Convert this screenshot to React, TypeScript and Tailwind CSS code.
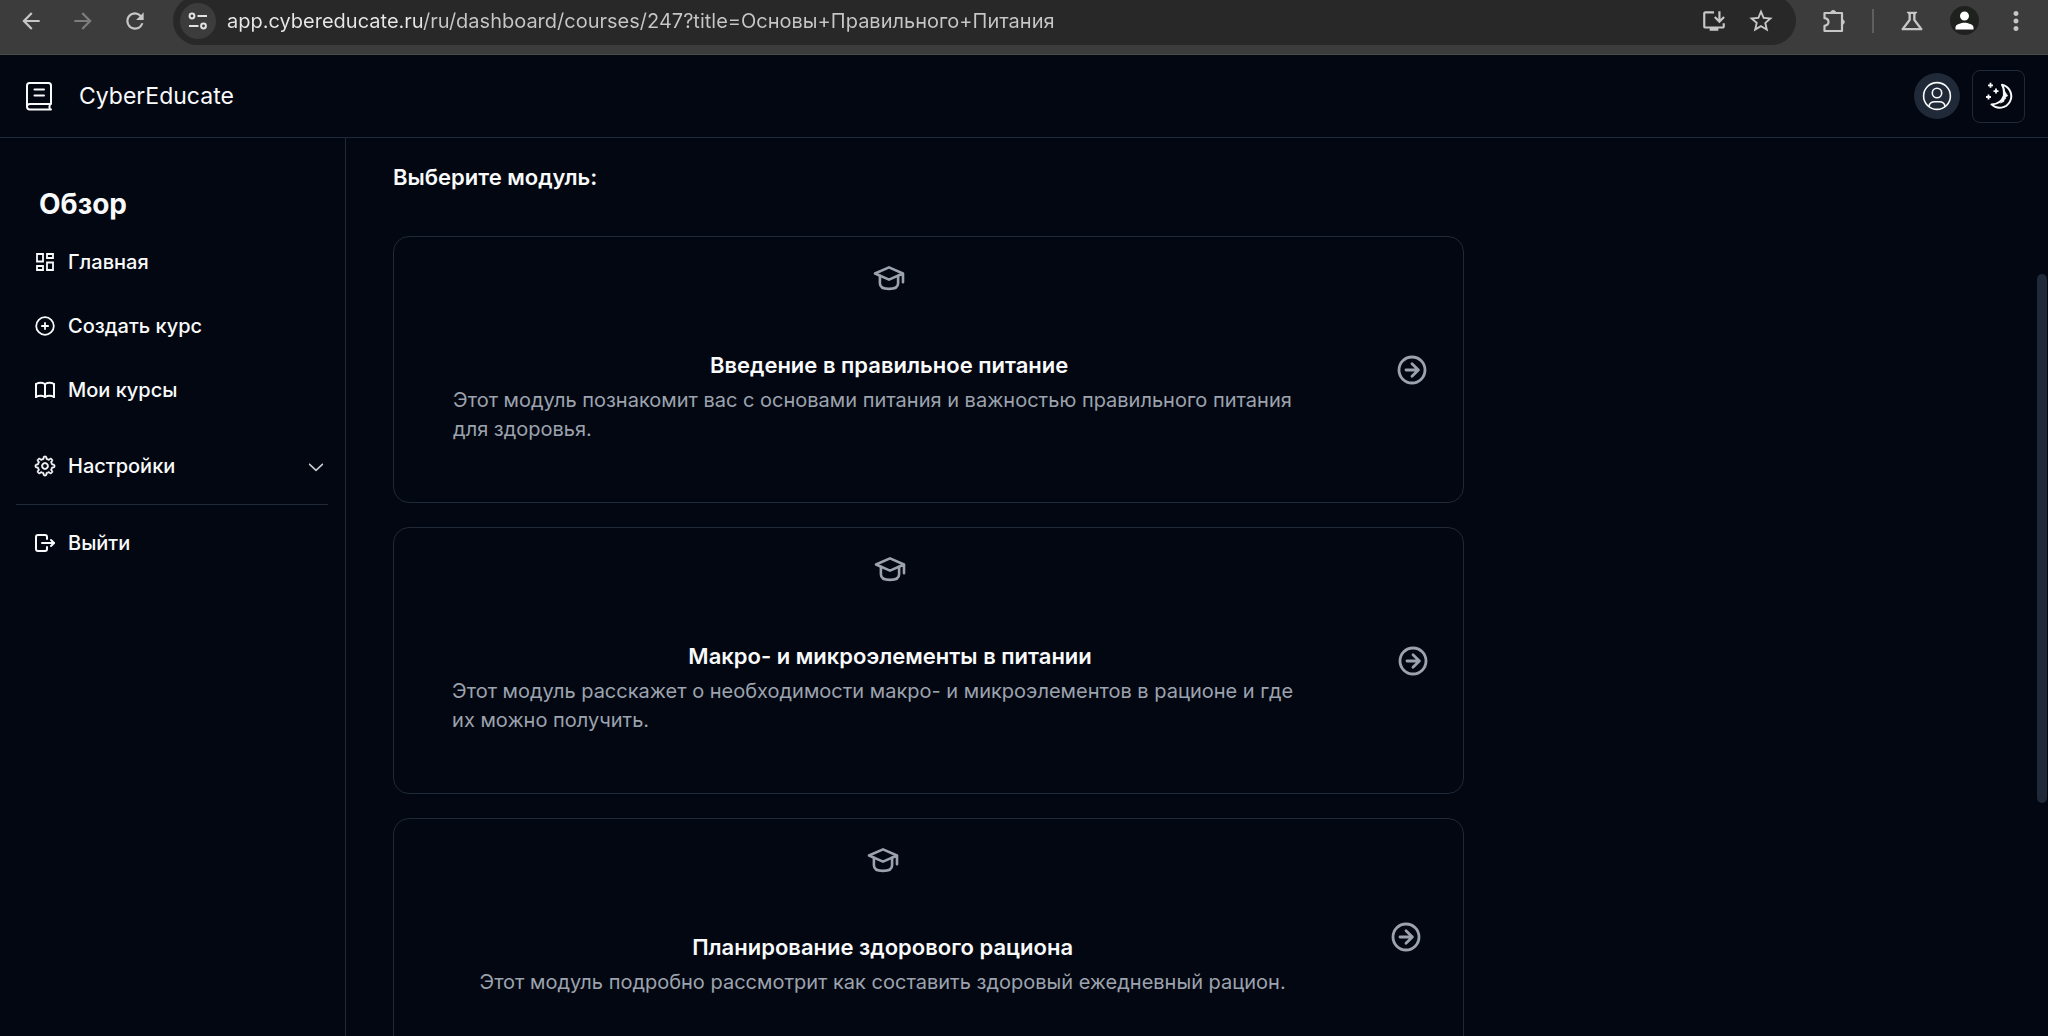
import type { ReactNode } from "react";
import {
  MdArrowBack,
  MdArrowForward,
  MdMoreVert,
  MdOutlineInstallDesktop,
  MdOutlineScience,
  MdPerson,
  MdRefresh,
  MdStarBorder,
} from "react-icons/md";
import { RxChevronDown, RxGear } from "react-icons/rx";
import { TbBook, TbLogout } from "react-icons/tb";

const modules = [
  {
    title: "Введение в правильное питание",
    description:
      "Этот модуль познакомит вас с основами питания и важностью правильного питания для здоровья.",
    width: "max-w-[872px]",
  },
  {
    title: "Макро- и микроэлементы в питании",
    description:
      "Этот модуль расскажет о необходимости макро- и микроэлементов в рационе и где их\u00a0можно получить.",
    width: "max-w-[876px]",
  },
  {
    title: "Планирование здорового рациона",
    description:
      "Этот модуль подробно рассмотрит как составить здоровый ежедневный рацион.",
    width: "max-w-[846px]",
  },
];

const TuneIcon = () => (
  <svg viewBox="0 0 20 18" className="w-5 h-[18px]" fill="none" stroke="currentColor" strokeWidth="2">
    <circle cx="4" cy="4" r="2.4" />
    <path d="M9.5 4H19M1 14h9.5" />
    <circle cx="15.5" cy="14" r="2.4" />
  </svg>
);

const PuzzleIcon = () => (
  <svg viewBox="0 0 26 26" className="w-[26px] h-[26px]" fill="none" stroke="currentColor" strokeWidth="2.2" strokeLinejoin="round">
    <path d="M3.5 5h17.5v18H3.5v-5.2c2.6-.4 4-1.8 4-3.8s-1.4-3.4-4-3.8z" />
    <path d="M9.5 4.5a2.8 2.8 0 0 1 5.4 0zM21.5 11.4a2.8 2.8 0 0 1 0 5.2z" fill="currentColor" strokeWidth="1" />
  </svg>
);

const LogoIcon = () => (
  <svg viewBox="0 0 28 30" className="w-7 h-[30px]" fill="none" stroke="currentColor" strokeWidth="2" strokeLinecap="round" strokeLinejoin="round">
    <path d="M2 25.5V4.5C2 2.8 3 2 4.5 2h19C25 2 26 2.8 26 4.5V23H4.8C3.2 23 2 24 2 25.8S3.2 28.5 4.8 28.5H26M25 23.5c-.8 1.6-.8 3.2 0 4.8" />
    <path d="M9.5 8.5h9.5M9.5 14.5h9.5" />
  </svg>
);

const UserIcon = () => (
  <svg viewBox="0 0 30 30" className="w-[30px] h-[30px]" fill="none" stroke="currentColor" strokeWidth="1.6">
    <circle cx="15" cy="15" r="13.4" />
    <circle cx="15" cy="12" r="4.7" />
    <path d="M7 25.6c.3-3.2 2.8-4.8 5.8-4.8h4.4c3 0 5.5 1.6 5.8 4.8" />
  </svg>
);

const MoonIcon = () => (
  <svg viewBox="0 0 28 28" className="w-7 h-7" fill="none" stroke="currentColor" strokeLinejoin="round">
    <path d="M17 2.8A11.6 11.6 0 1 1 6.500 22.400C12.500 22.200 17 19 18.800 14 19.800 10 19 6.300 17 2.800z" strokeWidth="2" />
    <path d="M18 5l2.200 5 2.600 3.800-2.200 1.400.2 1.600-1.600.8-.2 1.800-3.600 1.800 3-7z" fill="currentColor" strokeWidth="0.5" />
    <path d="M5.500.800v5M3 3.300h5M11 6.600v5M8.500 9.100h5M3.500 12.500v5M1 15h5" strokeWidth="1.800" />
  </svg>
);

const DashboardIcon = () => (
  <svg viewBox="0 0 24 24" className="w-6 h-6" fill="none" stroke="currentColor" strokeWidth="1.8">
    <path d="M4 4h6v7.500H4zM14 4h6v4h-6zM4 16h6v4H4zM14 12.500h6V20h-6z" />
  </svg>
);

const PlusCircleIcon = () => (
  <svg viewBox="0 0 24 24" className="w-6 h-6" fill="none" stroke="currentColor" strokeWidth="1.8">
    <circle cx="12" cy="12" r="8.8" />
    <path d="M12 8.200v7.600M8.200 12h7.600" />
  </svg>
);

const GraduationIcon = () => (
  <svg viewBox="0 0 32 32" className="w-8 h-8" fill="none" stroke="currentColor" strokeWidth="2.6" strokeLinecap="round" strokeLinejoin="round">
    <path d="M2 11.500 16 5.400l14 6.100-14 6.100zM30 11.500v8.800" />
    <path d="M6.900 13.800v7.400c0 3.200 3 5.700 9.100 5.700s9.100-2.500 9.100-5.700v-7.400" />
  </svg>
);

const ArrowCircleIcon = () => (
  <svg viewBox="0 0 30 30" className="w-[30px] h-[30px] shrink-0" fill="none" stroke="currentColor" strokeWidth="2.8" strokeLinecap="round" strokeLinejoin="round">
    <circle cx="15" cy="15" r="13" />
    <path d="M9 15h12.400M15 8.800l6.400 6.200-6.400 6.200" />
  </svg>
);

const ChromeButton = ({ label, children }: { label: string; children: ReactNode }) => (
  <button aria-label={label} className="w-[52px] shrink-0 flex items-center justify-center text-[#c7c7c7]">
    {children}
  </button>
);

const BrowserBar = () => (
  <div className="h-[55px] shrink-0 pb-[13px] pl-[5px] pr-[6px] flex items-center bg-[#3c3c3c] border-b border-[#4a4a48]">
    <ChromeButton label="Назад">
      <MdArrowBack className="w-[26px] h-[26px]" />
    </ChromeButton>
    <ChromeButton label="Вперёд">
      <MdArrowForward className="w-[26px] h-[26px] text-[#7d7d7d]" />
    </ChromeButton>
    <ChromeButton label="Обновить">
      <MdRefresh className="w-[26px] h-[26px]" />
    </ChromeButton>

    {/* Address bar */}
    <div className="h-[49px] grow min-w-0 mx-3 pl-[7px] pr-3 flex items-center rounded-full bg-[#282828]">
      <button aria-label="Сведения о сайте" className="w-9 h-9 shrink-0 rounded-full bg-[#3c3c3c] text-[#e3e3e3] flex items-center justify-center">
        <TuneIcon />
      </button>
      <input
        aria-label="Адрес"
        readOnly
        value="app.cybereducate.ru/ru/dashboard/courses/247?title=Основы+Правильного+Питания"
        className="ml-[11px] grow min-w-0 h-8 text-xl outline-none bg-linear-to-r from-[#e8e8e8] from-[196px] to-[#c7c7c7] to-[196px] bg-clip-text text-transparent"
      />
      <button aria-label="Установить приложение" className="w-[47px] shrink-0 flex justify-center text-[#c7c7c7]">
        <MdOutlineInstallDesktop className="w-[26px] h-[26px]" />
      </button>
      <button aria-label="Добавить в закладки" className="w-[47px] shrink-0 flex justify-center text-[#c7c7c7]">
        <MdStarBorder className="w-7 h-7" />
      </button>
    </div>

    <ChromeButton label="Расширения">
      <PuzzleIcon />
    </ChromeButton>
    <div className="w-[2px] h-6 mx-3 shrink-0 bg-[#5f5f5f]" />
    <ChromeButton label="Эксперименты">
      <MdOutlineScience className="w-7 h-7" />
    </ChromeButton>
    <ChromeButton label="Профиль">
      <span className="w-[29px] h-[29px] rounded-full bg-[#1f211f] flex items-center justify-center">
        <MdPerson className="w-[27px] h-[27px] text-white" />
      </span>
    </ChromeButton>
    <ChromeButton label="Меню">
      <MdMoreVert className="w-[30px] h-[30px]" />
    </ChromeButton>
  </div>
);

const Navbar = () => (
  <header className="h-[83px] shrink-0 pl-[25px] pr-[23px] flex items-center justify-between border-b border-[#1f2937]">
    <a href="#" className="flex items-center gap-[26px]">
      <LogoIcon />
      <span className="text-[23px] leading-8">CyberEducate</span>
    </a>
    <div className="flex items-center gap-3">
      <button aria-label="Аккаунт" className="w-[46px] h-[46px] rounded-full bg-[#1f2937] flex items-center justify-center">
        <UserIcon />
      </button>
      <button aria-label="Сменить тему" className="w-[53px] h-[53px] rounded-lg border border-[#1f2937] flex items-center justify-center">
        <MoonIcon />
      </button>
    </div>
  </header>
);

const NavItem = ({ icon, children }: { icon: ReactNode; children: ReactNode }) => (
  <a href="#" className="h-12 pl-[17px] flex items-center gap-[11px] text-xl font-medium">
    <span className="w-6 flex justify-center">{icon}</span>
    {children}
  </a>
);

const Sidebar = () => (
  <aside className="w-[346px] shrink-0 pt-12 pl-4 pr-[17px] border-r border-[#1f2937]">
    <h2 className="pl-[23px] mb-4 text-[28px] leading-9 font-bold">Обзор</h2>
    <nav>
      <div className="flex flex-col gap-4">
        <NavItem icon={<DashboardIcon />}>Главная</NavItem>
        <NavItem icon={<PlusCircleIcon />}>Создать курс</NavItem>
        <NavItem icon={<TbBook className="w-6 h-6" />}>Мои курсы</NavItem>
      </div>
      <button className="w-full h-12 mt-7 pl-[17px] flex items-center gap-[11px] text-xl font-medium">
        <span className="w-6 flex justify-center">
          <RxGear className="w-[22px] h-[22px]" stroke="currentColor" strokeWidth="0.4" />
        </span>
        Настройки
        <RxChevronDown className="w-6 h-6 ml-auto text-[#c9ccd2]" />
      </button>
      <hr className="my-[14px] border-[#1f2937]" />
      <NavItem icon={<TbLogout className="w-6 h-6" />}>Выйти</NavItem>
    </nav>
  </aside>
);

const ModuleCard = ({ title, description, width }: (typeof modules)[number]) => (
  <a href="#" className="pl-[23px] flex items-center justify-around rounded-2xl border border-[#1f2937] text-[#9ca3af]">
    <div className={`grow ${width} pt-[25px] pb-[58px] flex flex-col items-center`}>
      <GraduationIcon />
      <h3 className="mt-[55px] mb-[5px] text-[22px] leading-8 font-semibold text-[#f9fafb]">{title}</h3>
      <p className="text-xl leading-[29px]">{description}</p>
    </div>
    <ArrowCircleIcon />
  </a>
);

export default function App() {
  return (
    <div className="h-screen relative flex flex-col overflow-hidden bg-[#030711] text-[#f9fafb] font-['Inter',sans-serif]">
      <BrowserBar />
      <Navbar />
      <div className="flex grow min-h-0">
        <Sidebar />
        <main className="grow min-w-0 pt-[23px] pl-[47px] pr-12 overflow-hidden">
          <h1 className="text-[22px] leading-8 font-semibold">Выберите модуль:</h1>
          <div className="w-2/3 mt-[43px] flex flex-col gap-6">
            {modules.map((module) => (
              <ModuleCard key={module.title} {...module} />
            ))}
          </div>
        </main>
      </div>
      {/* Scrollbar thumb */}
      <div className="absolute right-px top-[274px] w-[10px] h-[529px] rounded-full bg-[#1f2937]" />
    </div>
  );
}
